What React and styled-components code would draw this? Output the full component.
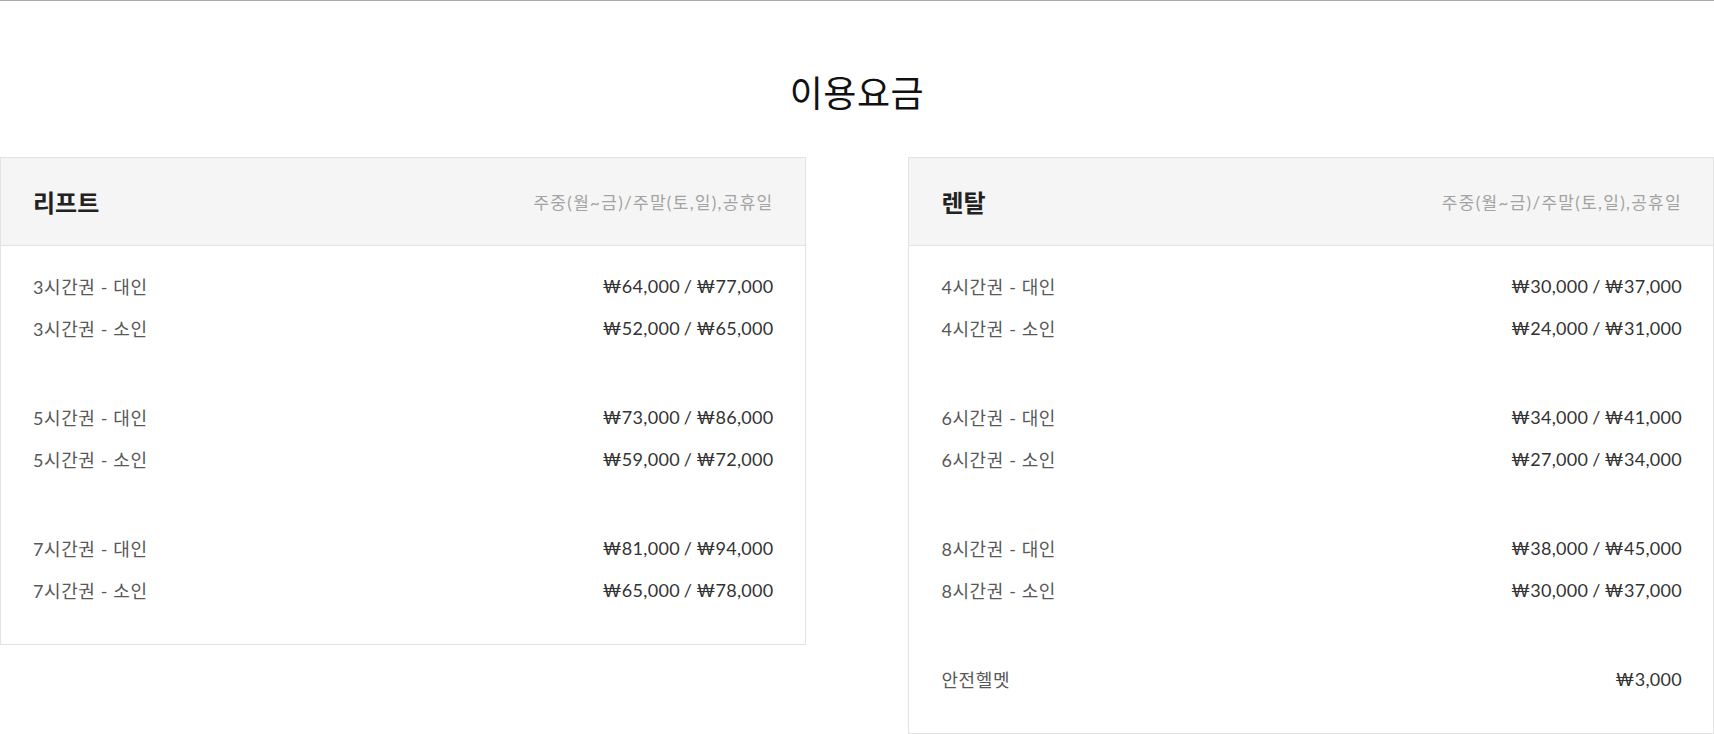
import React from 'react';
import styled, { createGlobalStyle } from 'styled-components';

const GlobalStyle = createGlobalStyle`
  html, body {
    margin: 0;
    padding: 0;
    background: #fff;
  }
  body {
    font-family: Lato, "Noto Sans CJK KR", sans-serif;
    color: #333;
  }
  * {
    box-sizing: border-box;
  }
`;

const SPage = styled.div`
  border-top: 1px solid #a9abb0;
`;

const STitle = styled.h2`
  margin: 72px 0 44px;
  font-size: 36px;
  line-height: 40px;
  font-weight: 400;
  text-align: center;
  letter-spacing: 0.5px;
  color: #111;
`;

const SCards = styled.div`
  display: flex;
  justify-content: space-between;
  align-items: flex-start;
`;

const SCard = styled.section`
  width: 47%;
  border: 1px solid #e3e3e3;
  background: #fff;
`;

const SCardHead = styled.div`
  display: flex;
  justify-content: space-between;
  align-items: center;
  height: 88px;
  padding: 0 31px 0 32px;
  background: #f5f5f5;
  border-bottom: 1px solid #e3e3e3;
`;

const SCardTitle = styled.h3`
  margin: 0;
  font-size: 24px;
  font-weight: 700;
  color: #222;
`;

const SCardNote = styled.span`
  font-size: 17px;
  letter-spacing: 1.3px;
  color: #a3a3a3;
`;

const SCardBody = styled.div`
  padding: 19px 31px 33px 32px;
`;

const SGroup = styled.ul`
  margin: 0;
  padding: 0;
  list-style: none;

  & + & {
    margin-top: 47px;
  }
`;

const SRow = styled.li`
  display: flex;
  justify-content: space-between;
  align-items: center;
  height: 42px;
`;

const SLabel = styled.span`
  font-size: 18px;
  letter-spacing: 0.6px;
  color: #585858;
`;

const SPrice = styled.span`
  font-size: 18px;
  letter-spacing: 0.3px;
  word-spacing: -1px;
  color: #333;
`;

const NOTE = '주중(월~금)/주말(토,일),공휴일';

const lift = [
  [
    ['3시간권 - 대인', '₩64,000 / ₩77,000'],
    ['3시간권 - 소인', '₩52,000 / ₩65,000'],
  ],
  [
    ['5시간권 - 대인', '₩73,000 / ₩86,000'],
    ['5시간권 - 소인', '₩59,000 / ₩72,000'],
  ],
  [
    ['7시간권 - 대인', '₩81,000 / ₩94,000'],
    ['7시간권 - 소인', '₩65,000 / ₩78,000'],
  ],
];

const rental = [
  [
    ['4시간권 - 대인', '₩30,000 / ₩37,000'],
    ['4시간권 - 소인', '₩24,000 / ₩31,000'],
  ],
  [
    ['6시간권 - 대인', '₩34,000 / ₩41,000'],
    ['6시간권 - 소인', '₩27,000 / ₩34,000'],
  ],
  [
    ['8시간권 - 대인', '₩38,000 / ₩45,000'],
    ['8시간권 - 소인', '₩30,000 / ₩37,000'],
  ],
  [['안전헬멧', '₩3,000']],
];

const PriceCard = ({ title, groups }) => (
  <SCard>
    <SCardHead>
      <SCardTitle>{title}</SCardTitle>
      <SCardNote>{NOTE}</SCardNote>
    </SCardHead>
    <SCardBody>
      {groups.map((group, i) => (
        <SGroup key={i}>
          {group.map(([label, price]) => (
            <SRow key={label}>
              <SLabel>{label}</SLabel>
              <SPrice>{price}</SPrice>
            </SRow>
          ))}
        </SGroup>
      ))}
    </SCardBody>
  </SCard>
);

const App = () => (
  <SPage>
    <GlobalStyle />
    <STitle>이용요금</STitle>
    <SCards>
      <PriceCard title="리프트" groups={lift} />
      <PriceCard title="렌탈" groups={rental} />
    </SCards>
  </SPage>
);

export default App;
